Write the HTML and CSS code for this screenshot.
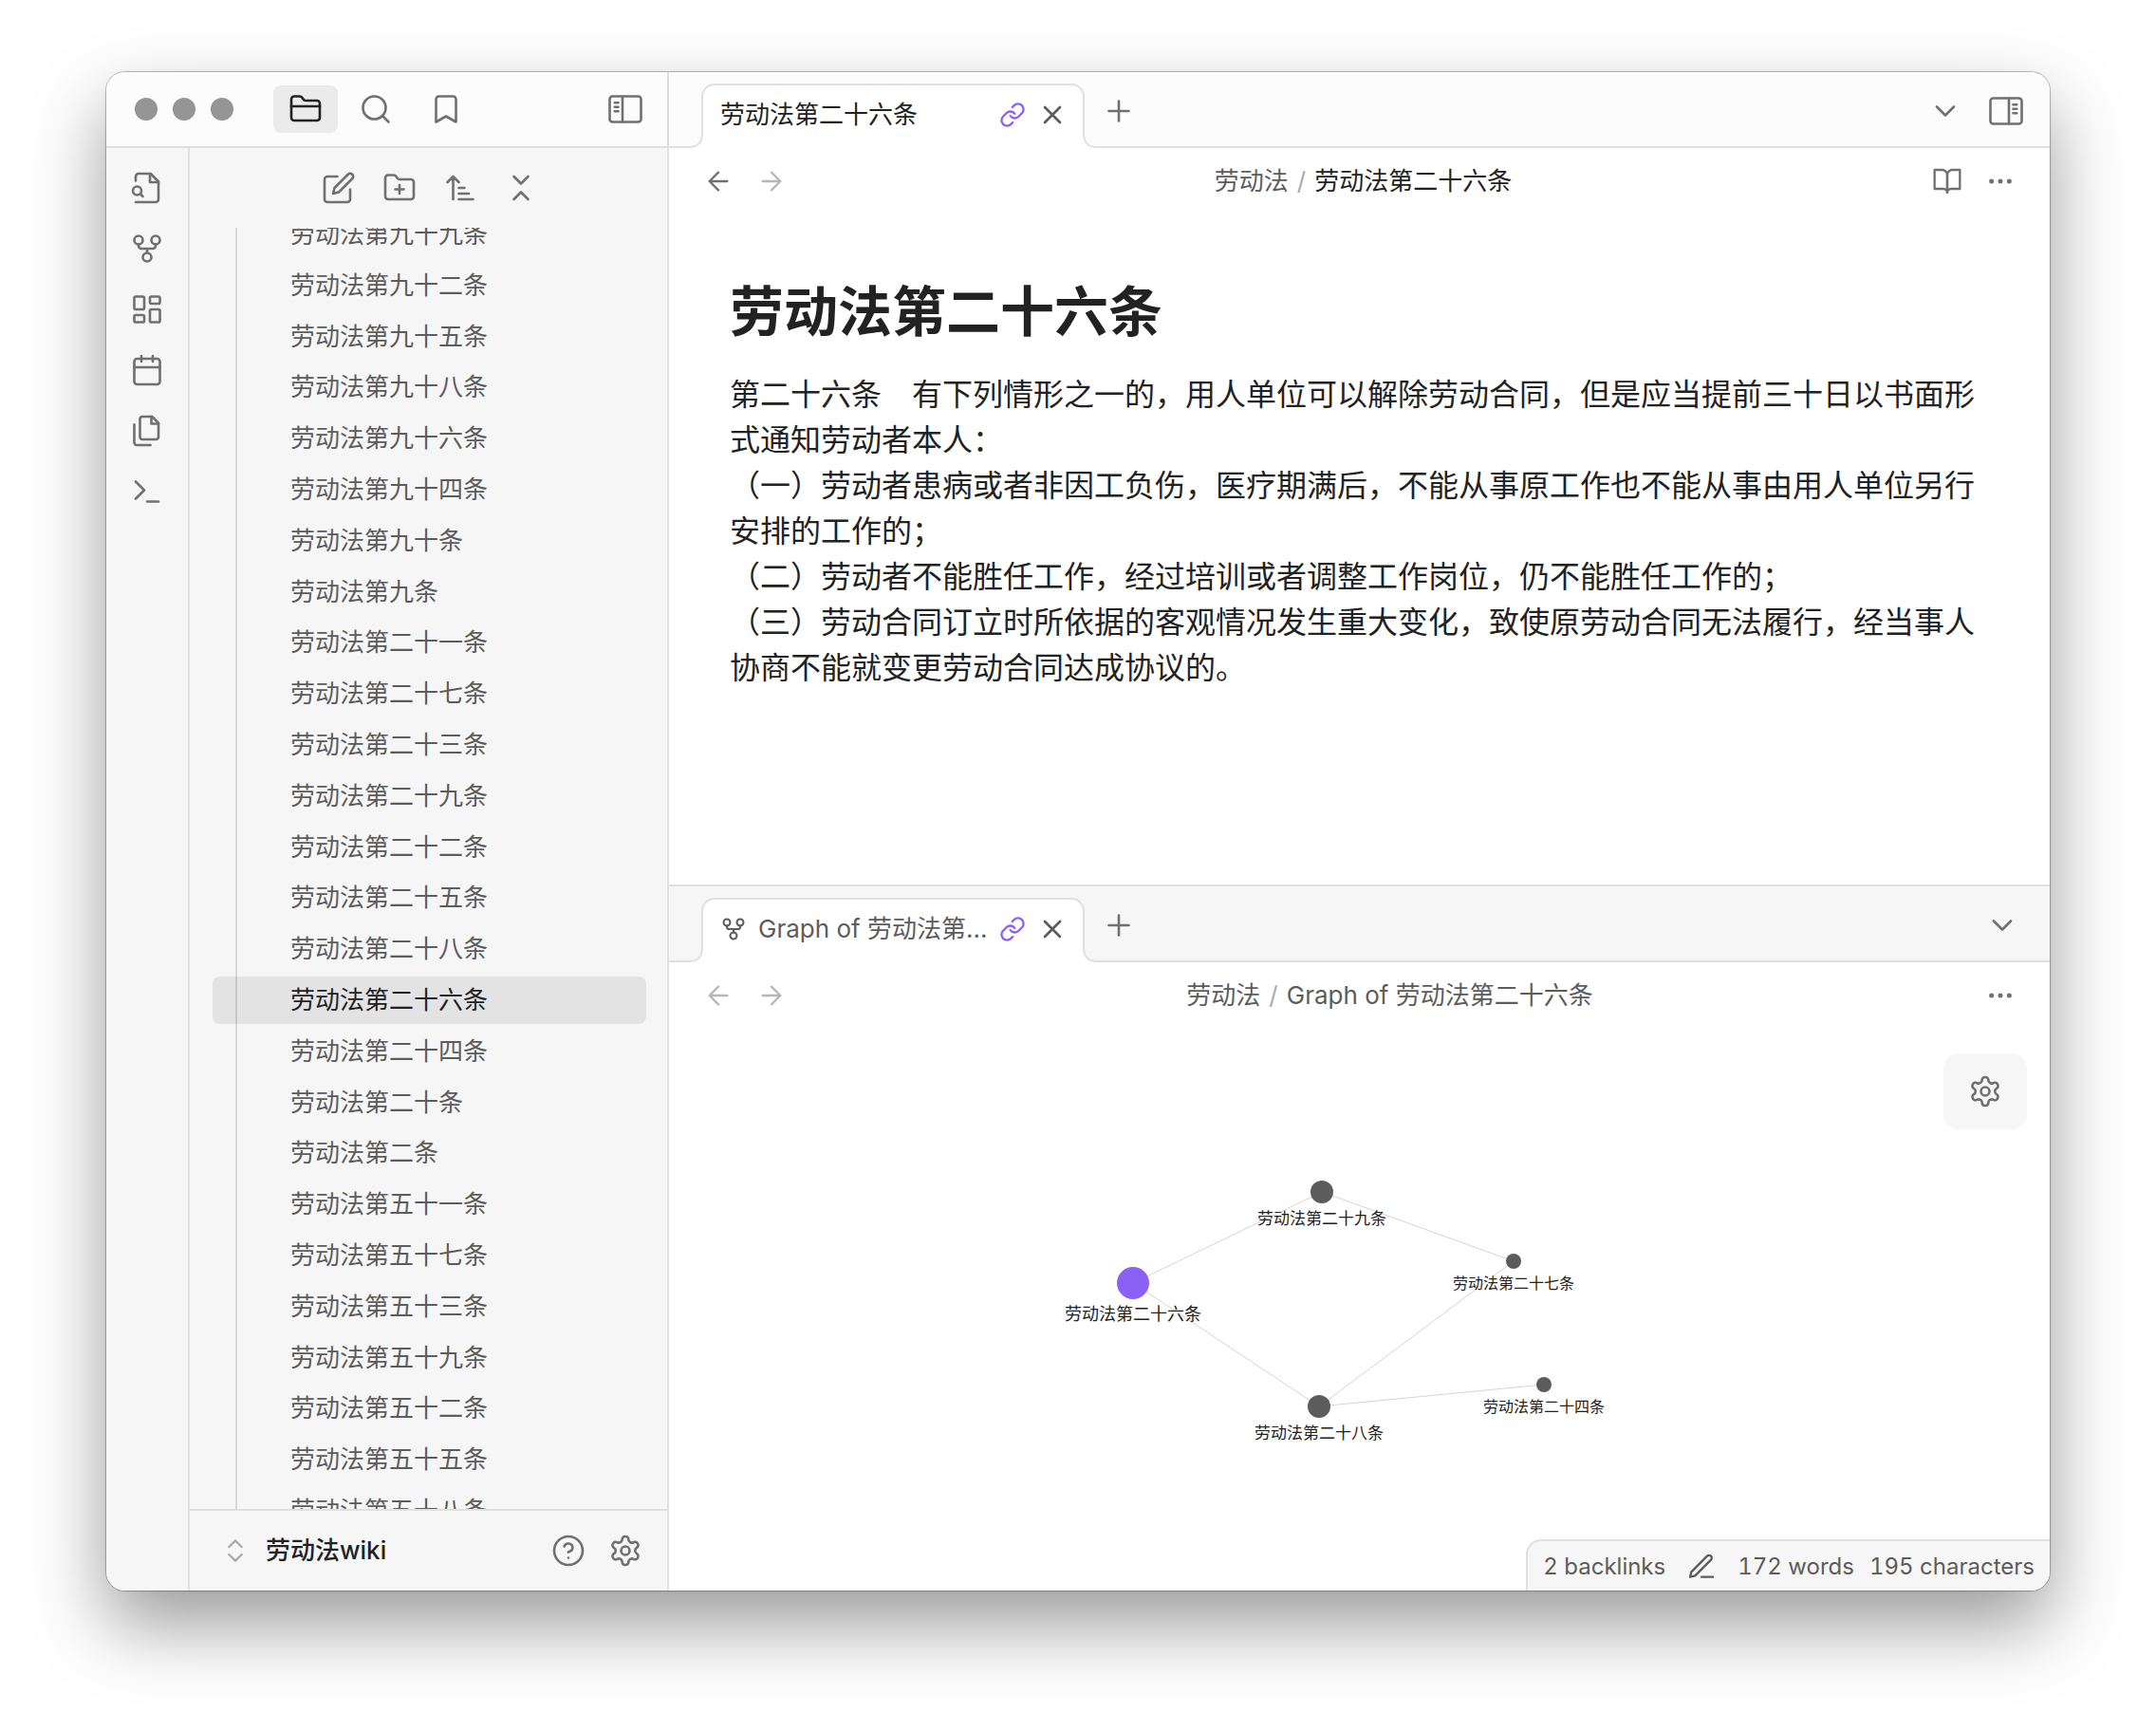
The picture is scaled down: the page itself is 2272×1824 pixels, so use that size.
FILE: index.html
```html
<!DOCTYPE html>
<html lang="zh-CN">
<head>
<meta charset="utf-8">
<title>劳动法第二十六条</title>
<link rel="stylesheet" href="styles.css">
</head>
<body>
<svg class="sprite" aria-hidden="true">
  <symbol id="folder" viewBox="0 0 24 24"><path d="M4 20h16a2 2 0 0 0 2-2V8a2 2 0 0 0-2-2h-7.93a2 2 0 0 1-1.66-.9l-.82-1.2A2 2 0 0 0 7.93 3H4a2 2 0 0 0-2 2v13c0 1.1.9 2 2 2Z"/><path d="M2 10h20"/></symbol>
  <symbol id="search" viewBox="0 0 24 24"><circle cx="11" cy="11" r="8"/><path d="m21 21-4.3-4.3"/></symbol>
  <symbol id="bookmark" viewBox="0 0 24 24"><path d="m19 21-7-4-7 4V5a2 2 0 0 1 2-2h10a2 2 0 0 1 2 2v16z"/></symbol>
  <symbol id="panel-left" viewBox="0 0 24 24"><rect x="1" y="3" width="22" height="18" rx="2"/><path d="M10 3v18M4.500 7.500h2.500M4.500 10.500h2.500M4.500 13.500h2.500"/></symbol>
  <symbol id="panel-right" viewBox="0 0 24 24"><rect x="1" y="3" width="22" height="18" rx="2"/><path d="M14 3v18M17 7.500h2.500M17 10.500h2.500M17 13.500h2.500"/></symbol>
  <symbol id="file-search" viewBox="0 0 24 24"><path d="M4 22h14a2 2 0 0 0 2-2V7.500L14.500 2H6a2 2 0 0 0-2 2v3"/><path d="M14 2v6h6"/><circle cx="5" cy="14" r="3"/><path d="m9 18-1.500-1.500"/></symbol>
  <symbol id="fork" viewBox="0 0 24 24"><circle cx="12" cy="18" r="3"/><circle cx="6" cy="6" r="3"/><circle cx="18" cy="6" r="3"/><path d="M18 9v1a2 2 0 0 1-2 2H8a2 2 0 0 1-2-2V9M12 12v3"/></symbol>
  <symbol id="dashboard" viewBox="0 0 24 24"><rect x="3" y="3" width="7" height="9" rx="1"/><rect x="14" y="3" width="7" height="5" rx="1"/><rect x="14" y="12" width="7" height="9" rx="1"/><rect x="3" y="16" width="7" height="5" rx="1"/></symbol>
  <symbol id="calendar" viewBox="0 0 24 24"><rect x="3" y="4" width="18" height="18" rx="2"/><path d="M16 2v4M8 2v4M3 10h18"/></symbol>
  <symbol id="files" viewBox="0 0 24 24"><path d="M15.500 2H8.600c-.4 0-.8.2-1.100.5-.3.3-.5.7-.5 1.100v12.800c0 .4.2.8.5 1.100.3.3.7.5 1.100.5h9.800c.4 0 .8-.2 1.100-.5.3-.3.5-.7.5-1.100V6.500L15.500 2z"/><path d="M3 7.600v12.800c0 .4.2.8.5 1.100.3.3.7.5 1.100.5h9.800M15 2v5h5"/></symbol>
  <symbol id="terminal" viewBox="0 0 24 24"><path d="m4 17 6-6-6-6M12 19h8"/></symbol>
  <symbol id="edit" viewBox="0 0 24 24"><path d="M11 4H4a2 2 0 0 0-2 2v14a2 2 0 0 0 2 2h14a2 2 0 0 0 2-2v-7"/><path d="M18.500 2.500a2.121 2.121 0 0 1 3 3L12 15l-4 1 1-4 9.500-9.500z"/></symbol>
  <symbol id="folder-plus" viewBox="0 0 24 24"><path d="M4 20h16a2 2 0 0 0 2-2V8a2 2 0 0 0-2-2h-7.930a2 2 0 0 1-1.660-.9l-.82-1.200A2 2 0 0 0 7.930 3H4a2 2 0 0 0-2 2v13c0 1.100.9 2 2 2Z"/><path d="M12 10v6M9 13h6"/></symbol>
  <symbol id="sort" viewBox="0 0 24 24"><path d="m3 8 4-4 4 4M7 4v16M11 12h4M11 16h7M11 20h10"/></symbol>
  <symbol id="collapse" viewBox="0 0 24 24"><path d="m7 20 5-5 5 5M7 4l5 5 5-5"/></symbol>
  <symbol id="up-down" viewBox="0 0 24 24"><path d="m7 15 5 5 5-5M7 9l5-5 5 5"/></symbol>
  <symbol id="help" viewBox="0 0 24 24"><circle cx="12" cy="12" r="10"/><path d="M9.090 9a3 3 0 0 1 5.830 1c0 2-3 3-3 3M12 17h.01"/></symbol>
  <symbol id="gear" viewBox="0 0 24 24"><path d="M12.220 2h-.44a2 2 0 0 0-2 2v.18a2 2 0 0 1-1 1.730l-.43.25a2 2 0 0 1-2 0l-.15-.08a2 2 0 0 0-2.730.73l-.22.38a2 2 0 0 0 .73 2.730l.15.1a2 2 0 0 1 1 1.720v.51a2 2 0 0 1-1 1.740l-.15.09a2 2 0 0 0-.73 2.730l.22.38a2 2 0 0 0 2.730.73l.15-.08a2 2 0 0 1 2 0l.43.25a2 2 0 0 1 1 1.730V20a2 2 0 0 0 2 2h.44a2 2 0 0 0 2-2v-.18a2 2 0 0 1 1-1.730l.43-.25a2 2 0 0 1 2 0l.15.08a2 2 0 0 0 2.730-.73l.22-.39a2 2 0 0 0-.73-2.730l-.15-.08a2 2 0 0 1-1-1.740v-.5a2 2 0 0 1 1-1.740l.15-.09a2 2 0 0 0 .73-2.730l-.22-.38a2 2 0 0 0-2.730-.73l-.15.08a2 2 0 0 1-2 0l-.43-.25a2 2 0 0 1-1-1.730V4a2 2 0 0 0-2-2z"/><circle cx="12" cy="12" r="3"/></symbol>
  <symbol id="link" viewBox="0 0 24 24"><path d="M10 13a5 5 0 0 0 7.540.54l3-3a5 5 0 0 0-7.070-7.070l-1.720 1.710"/><path d="M14 11a5 5 0 0 0-7.540-.54l-3 3a5 5 0 0 0 7.070 7.070l1.710-1.710"/></symbol>
  <symbol id="close" viewBox="0 0 24 24"><path d="M18 6 6 18M6 6l12 12"/></symbol>
  <symbol id="plus" viewBox="0 0 24 24"><path d="M5 12h14M12 5v14"/></symbol>
  <symbol id="chevron" viewBox="0 0 24 24"><path d="m6 9 6 6 6-6"/></symbol>
  <symbol id="back" viewBox="0 0 24 24"><path d="m12 19-7-7 7-7M19 12H5"/></symbol>
  <symbol id="forward" viewBox="0 0 24 24"><path d="M5 12h14M12 5l7 7-7 7"/></symbol>
  <symbol id="book" viewBox="0 0 24 24"><path d="M2 3h6a4 4 0 0 1 4 4v14a3 3 0 0 0-3-3H2z"/><path d="M22 3h-6a4 4 0 0 0-4 4v14a3 3 0 0 1 3-3h7z"/></symbol>
  <symbol id="more" viewBox="0 0 24 24"><circle cx="12" cy="12" r="1"/><circle cx="19" cy="12" r="1"/><circle cx="5" cy="12" r="1"/></symbol>
  <symbol id="pencil" viewBox="0 0 24 24"><path d="M12 20h9M16.500 3.500a2.121 2.121 0 0 1 3 3L7 19l-4 1 1-4Z"/></symbol>
</svg>

<div class="app">
  <div class="left">
    <header class="left-header">
      <div class="lights"><span></span><span></span><span></span></div>
      <div class="side-tabs">
        <button class="side-tab active" aria-label="文件列表"><svg class="icon"><use href="#folder"/></svg></button>
        <button class="side-tab" aria-label="搜索"><svg class="icon"><use href="#search"/></svg></button>
        <button class="side-tab" aria-label="书签"><svg class="icon"><use href="#bookmark"/></svg></button>
      </div>
      <button class="toggle" aria-label="折叠边栏"><svg class="icon"><use href="#panel-left"/></svg></button>
    </header>
    <div class="left-body">
      <nav class="ribbon">
        <button aria-label="快速切换"><svg class="icon"><use href="#file-search"/></svg></button>
        <button aria-label="关系图谱"><svg class="icon"><use href="#fork"/></svg></button>
        <button aria-label="白板"><svg class="icon"><use href="#dashboard"/></svg></button>
        <button aria-label="日记"><svg class="icon"><use href="#calendar"/></svg></button>
        <button aria-label="模板"><svg class="icon"><use href="#files"/></svg></button>
        <button aria-label="命令面板"><svg class="icon"><use href="#terminal"/></svg></button>
      </nav>
      <aside class="sidebar">
        <div class="file-actions">
          <button aria-label="新建笔记"><svg class="icon"><use href="#edit"/></svg></button>
          <button aria-label="新建文件夹"><svg class="icon"><use href="#folder-plus"/></svg></button>
          <button aria-label="排序"><svg class="icon"><use href="#sort"/></svg></button>
          <button aria-label="全部折叠"><svg class="icon"><use href="#collapse"/></svg></button>
        </div>
        <div class="file-scroll">
          <ul class="files">
            <li><a href="#">劳动法第九十九条</a></li>
            <li><a href="#">劳动法第九十二条</a></li>
            <li><a href="#">劳动法第九十五条</a></li>
            <li><a href="#">劳动法第九十八条</a></li>
            <li><a href="#">劳动法第九十六条</a></li>
            <li><a href="#">劳动法第九十四条</a></li>
            <li><a href="#">劳动法第九十条</a></li>
            <li><a href="#">劳动法第九条</a></li>
            <li><a href="#">劳动法第二十一条</a></li>
            <li><a href="#">劳动法第二十七条</a></li>
            <li><a href="#">劳动法第二十三条</a></li>
            <li><a href="#">劳动法第二十九条</a></li>
            <li><a href="#">劳动法第二十二条</a></li>
            <li><a href="#">劳动法第二十五条</a></li>
            <li><a href="#">劳动法第二十八条</a></li>
            <li><a href="#" class="current">劳动法第二十六条</a></li>
            <li><a href="#">劳动法第二十四条</a></li>
            <li><a href="#">劳动法第二十条</a></li>
            <li><a href="#">劳动法第二条</a></li>
            <li><a href="#">劳动法第五十一条</a></li>
            <li><a href="#">劳动法第五十七条</a></li>
            <li><a href="#">劳动法第五十三条</a></li>
            <li><a href="#">劳动法第五十九条</a></li>
            <li><a href="#">劳动法第五十二条</a></li>
            <li><a href="#">劳动法第五十五条</a></li>
            <li><a href="#">劳动法第五十八条</a></li>
          </ul>
        </div>
        <footer class="vault">
          <button class="vault-name"><svg class="icon small faint"><use href="#up-down"/></svg>劳动法wiki</button>
          <button aria-label="帮助"><svg class="icon"><use href="#help"/></svg></button>
          <button aria-label="设置"><svg class="icon"><use href="#gear"/></svg></button>
        </footer>
      </aside>
    </div>
  </div>

  <main class="main">
    <section class="pane">
      <header class="tab-bar">
        <div class="tab">
          <span class="tab-title">劳动法第二十六条</span>
          <button class="linked" aria-label="取消关联"><svg class="icon tiny"><use href="#link"/></svg></button>
          <button class="close" aria-label="关闭"><svg class="icon small"><use href="#close"/></svg></button>
        </div>
        <button class="new-tab" aria-label="新标签页"><svg class="icon"><use href="#plus"/></svg></button>
        <div class="bar-end">
          <button aria-label="标签页列表"><svg class="icon"><use href="#chevron"/></svg></button>
          <button aria-label="展开边栏"><svg class="icon"><use href="#panel-right"/></svg></button>
        </div>
      </header>
      <div class="view-header">
        <div class="history">
          <button aria-label="后退"><svg class="icon small"><use href="#back"/></svg></button>
          <button aria-label="前进" disabled><svg class="icon small"><use href="#forward"/></svg></button>
        </div>
        <div class="crumbs"><a href="#">劳动法</a><span class="slash">/</span><span class="here">劳动法第二十六条</span></div>
        <div class="view-actions">
          <button aria-label="阅读视图"><svg class="icon small"><use href="#book"/></svg></button>
          <button aria-label="更多选项"><svg class="icon small"><use href="#more"/></svg></button>
        </div>
      </div>
      <article class="note">
        <h1>劳动法第二十六条</h1>
        <p>第二十六条　有下列情形之一的，用人单位可以解除劳动合同，但是应当提前三十日以书面形式通知劳动者本人：</p>
        <p>（一）劳动者患病或者非因工负伤，医疗期满后，不能从事原工作也不能从事由用人单位另行安排的工作的；</p>
        <p>（二）劳动者不能胜任工作，经过培训或者调整工作岗位，仍不能胜任工作的；</p>
        <p>（三）劳动合同订立时所依据的客观情况发生重大变化，致使原劳动合同无法履行，经当事人协商不能就变更劳动合同达成协议的。</p>
      </article>
    </section>

    <section class="pane lower">
      <header class="tab-bar">
        <div class="tab">
          <svg class="icon tiny"><use href="#fork"/></svg>
          <span class="tab-title">Graph of 劳动法第...</span>
          <button class="linked" aria-label="取消关联"><svg class="icon tiny"><use href="#link"/></svg></button>
          <button class="close" aria-label="关闭"><svg class="icon small"><use href="#close"/></svg></button>
        </div>
        <button class="new-tab" aria-label="新标签页"><svg class="icon"><use href="#plus"/></svg></button>
        <div class="bar-end">
          <button aria-label="标签页列表"><svg class="icon"><use href="#chevron"/></svg></button>
        </div>
      </header>
      <div class="view-header">
        <div class="history">
          <button aria-label="后退" disabled><svg class="icon small"><use href="#back"/></svg></button>
          <button aria-label="前进" disabled><svg class="icon small"><use href="#forward"/></svg></button>
        </div>
        <div class="crumbs"><a href="#">劳动法</a><span class="slash">/</span><span>Graph of 劳动法第二十六条</span></div>
        <div class="view-actions">
          <button aria-label="更多选项"><svg class="icon small"><use href="#more"/></svg></button>
        </div>
      </div>
      <div class="graph">
        <svg class="graph-canvas" viewBox="0 0 1455 592">
          <g class="edges">
            <path d="M489 268 688 172 890 245 685 398 489 268M685 398 922 375"/>
          </g>
          <g class="nodes">
            <circle class="focus" cx="489" cy="268" r="17"/>
            <circle cx="688" cy="172" r="12"/>
            <circle cx="890" cy="245" r="8"/>
            <circle cx="685" cy="398" r="12"/>
            <circle cx="922" cy="375" r="8"/>
          </g>
          <g class="labels">
            <text class="large" x="489" y="307">劳动法第二十六条</text>
            <text class="medium" x="688" y="206">劳动法第二十九条</text>
            <text x="890" y="274">劳动法第二十七条</text>
            <text class="medium" x="685" y="432">劳动法第二十八条</text>
            <text x="922" y="404">劳动法第二十四条</text>
          </g>
        </svg>
        <button class="graph-settings" aria-label="图谱设置"><svg class="icon"><use href="#gear"/></svg></button>
      </div>
    </section>

    <footer class="status">
      <span class="backlinks">2 backlinks</span>
      <button aria-label="编辑模式"><svg class="icon small"><use href="#pencil"/></svg></button>
      <span class="words">172 words</span>
      <span>195 characters</span>
    </footer>
  </main>
</div>
</body>
</html>
```

FILE: styles.css
```css
:root {
  --line: #e0e0e0;
  --panel: #f6f6f6;
  --bar: #fcfcfc;
  --text: #222222;
  --muted: #5c5c5c;
  --icon: #707070;
  --faint: #ababab;
  --accent: #8b61f5;
}

* {
  box-sizing: border-box;
}

body {
  display: flex;
  min-height: 100vh;
  margin: 0;
  padding: 76px 112px 148px;
  background: #ffffff;
  color: var(--muted);
  font: 26px/1.3 Inter, "Noto Sans CJK SC", sans-serif;
  text-spacing-trim: space-all;
}

button {
  display: flex;
  align-items: center;
  justify-content: center;
  flex: none;
  margin: 0;
  padding: 0;
  border: 0;
  background: none;
  color: var(--icon);
  font: inherit;
}

a {
  color: inherit;
  text-decoration: none;
}

.sprite {
  position: absolute;
  width: 0;
  height: 0;
}

.icon {
  flex: none;
  width: 36px;
  height: 36px;
  fill: none;
  stroke: currentColor;
  stroke-width: 1.75;
  stroke-linecap: round;
  stroke-linejoin: round;
}

.icon.small {
  width: 32px;
  height: 32px;
}

.icon.tiny {
  width: 28px;
  height: 28px;
}

.icon.faint {
  color: var(--faint);
}

.app {
  display: grid;
  grid-template-columns: 593px minmax(0, 1fr);
  flex: 1;
  height: calc(100vh - 224px);
  overflow: hidden;
  border-radius: 20px;
  background: #ffffff;
  box-shadow: 0 0 1px 1px rgba(0, 0, 0, 0.28), 0 36px 80px rgba(0, 0, 0, 0.4);
}

/* Left side: window controls, ribbon and file list */

.left {
  display: flex;
  flex-direction: column;
  min-height: 0;
  background: var(--panel);
}

.left-header {
  display: flex;
  align-items: center;
  flex: none;
  height: 80px;
  padding: 0 26px 0 30px;
  border-right: 2px solid var(--line);
  border-bottom: 2px solid var(--line);
  background: var(--bar);
}

.lights {
  display: flex;
  gap: 16px;
}

.lights span {
  width: 24px;
  height: 24px;
  border-radius: 50%;
  background: #959595;
}

.side-tabs {
  display: flex;
  gap: 6px;
  margin-left: 42px;
}

.side-tab {
  width: 68px;
  height: 50px;
  border-radius: 8px;
}

.side-tab.active {
  background: #ebebeb;
  color: var(--text);
}

.toggle {
  margin-left: auto;
}

.left-body {
  display: flex;
  flex: 1;
  min-height: 0;
}

.ribbon {
  display: flex;
  flex: none;
  flex-direction: column;
  align-items: center;
  gap: 28px;
  width: 88px;
  padding-top: 24px;
  border-right: 2px solid var(--line);
}

.sidebar {
  display: flex;
  flex: 1;
  flex-direction: column;
  min-width: 0;
  border-right: 2px solid var(--line);
}

.file-actions {
  display: flex;
  align-items: center;
  justify-content: center;
  flex: none;
  gap: 28px;
  height: 84px;
  padding-left: 2px;
}

.file-scroll {
  position: relative;
  flex: 1;
  min-height: 0;
  overflow: hidden;
  padding: 0 22px 0 24px;
}

/* Indentation guide of the open folder */
.file-scroll::after {
  content: "";
  position: absolute;
  top: 0;
  bottom: 0;
  left: 48px;
  width: 2px;
  background: rgba(0, 0, 0, 0.12);
}

.files {
  margin: -18px 0 0;
  padding: 0;
  list-style: none;
}

.files li {
  padding-bottom: 4px;
}

.files a {
  display: block;
  padding: 8px 16px 8px 82px;
  border-radius: 8px;
}

.files .current {
  background: #e3e3e3;
  color: var(--text);
}

.vault {
  display: flex;
  align-items: center;
  flex: none;
  gap: 24px;
  height: 86px;
  padding: 0 26px 0 32px;
  border-top: 2px solid var(--line);
}

.vault-name {
  gap: 16px;
  margin-right: auto;
  color: var(--text);
  font-weight: 500;
}

/* Main area */

.main {
  position: relative;
  display: grid;
  grid-template-rows: minmax(0, 856fr) minmax(0, 744fr);
  min-height: 0;
}

.pane {
  display: flex;
  flex-direction: column;
  min-height: 0;
  overflow: hidden;
}

.lower {
  border-top: 2px solid var(--line);
}

.tab-bar {
  display: flex;
  align-items: center;
  flex: none;
  height: 80px;
  padding: 4px 28px 0 34px;
  border-bottom: 2px solid var(--line);
  background: var(--bar);
}

.lower .tab-bar {
  padding-right: 32px;
  background: var(--panel);
}

.tab {
  position: relative;
  display: flex;
  align-items: center;
  align-self: flex-end;
  flex: none;
  gap: 12px;
  width: 404px;
  height: 68px;
  margin-bottom: -2px;
  padding: 0 16px 4px 18px;
  border: 2px solid var(--line);
  border-bottom: 0;
  border-radius: 14px 14px 0 0;
  background: #ffffff;
}

.tab::before,
.tab::after {
  content: "";
  position: absolute;
  bottom: 0;
  width: 12px;
  height: 12px;
}

.tab::before {
  left: -12px;
  background: radial-gradient(circle at 0 0, transparent 9px, var(--line) 10px 11px, #ffffff 12px);
}

.tab::after {
  right: -12px;
  background: radial-gradient(circle at 100% 0, transparent 9px, var(--line) 10px 11px, #ffffff 12px);
}

.tab-title {
  flex: 1;
  min-width: 0;
  color: var(--text);
  white-space: nowrap;
}

.lower .tab-title {
  color: var(--muted);
}

.linked {
  color: var(--accent);
}

.close {
  color: var(--muted);
}

.linked .icon,
.close .icon {
  stroke-width: 2;
}

.new-tab {
  margin-left: 18px;
}

.bar-end {
  display: flex;
  gap: 28px;
  margin-left: auto;
}

.view-header {
  display: flex;
  align-items: center;
  flex: none;
  height: 70px;
  padding: 0 24px;
}

.history,
.view-actions {
  display: flex;
}

.history {
  margin-right: 8px;
}

.history button,
.view-actions button {
  width: 56px;
}

.history button:disabled {
  opacity: 0.5;
}

.crumbs {
  display: flex;
  justify-content: center;
  flex: 1;
  gap: 9px;
}

.slash {
  color: var(--faint);
}

.here {
  color: var(--text);
}

.note {
  padding: 68px 64px 0;
  color: var(--text);
  font-size: 32px;
  line-height: 48px;
}

.note h1 {
  margin: 0 0 28px;
  font-size: 57px;
  font-weight: 700;
  line-height: 70px;
}

.note p {
  margin: 0;
}

/* Local graph */

.graph {
  position: relative;
  flex: 1;
  min-height: 0;
}

.graph-canvas {
  display: block;
  width: 100%;
  height: 100%;
}

.edges {
  fill: none;
  stroke: #d4d4d4;
  stroke-width: 1;
}

.nodes {
  fill: var(--muted);
}

.focus {
  fill: var(--accent);
}

.labels {
  fill: var(--text);
  font-size: 16px;
  text-anchor: middle;
}

.labels .medium {
  font-size: 17px;
}

.labels .large {
  font-size: 18px;
}

.graph-settings {
  position: absolute;
  top: 26px;
  right: 24px;
  width: 88px;
  height: 80px;
  border-radius: 16px;
  background: var(--panel);
}

/* Status bar, over the lower right corner of the window */

.status {
  position: absolute;
  right: 0;
  bottom: 0;
  display: flex;
  align-items: center;
  height: 54px;
  padding: 2px 16px 0;
  border-top: 2px solid var(--line);
  border-left: 2px solid var(--line);
  border-top-left-radius: 16px;
  background: var(--panel);
  font-size: 24px;
  font-variant-numeric: tabular-nums;
}

.status button {
  margin: 0 22px;
  color: var(--muted);
}

.words {
  margin-right: 16px;
}
```
